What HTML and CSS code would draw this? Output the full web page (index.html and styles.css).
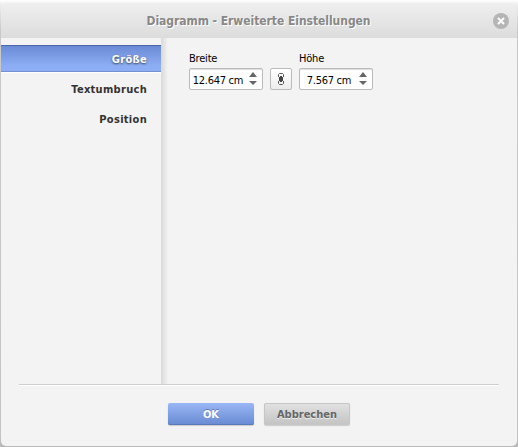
FILE: index.html
```html
<!DOCTYPE html>
<html lang="de">
<head>
<meta charset="utf-8">
<title>Diagramm - Erweiterte Einstellungen</title>
<link rel="stylesheet" href="styles.css">
</head>
<body>
<div class="dialog">
  <header class="header">
    <h1 class="title">Diagramm - Erweiterte Einstellungen</h1>
    <svg class="close" width="16" height="16" viewBox="0 0 16 16"><circle cx="8" cy="8" r="8" fill="#b5b5b5"/><path d="M5 5l6 6M11 5l-6 6" stroke="#fff" stroke-width="2"/></svg>
  </header>
  <main class="body">
    <nav class="menu">
      <div class="item active">Größe</div>
      <div class="item">Textumbruch</div>
      <div class="item">Position</div>
    </nav>
    <div class="separator"></div>
    <section class="content">
      <div class="field">
        <label>Breite</label>
        <div class="spinner"><span>12.647 cm</span><svg width="8" height="14" viewBox="0 0 8 14"><path d="M4 0L8 5H0zM0 9h8L4 13z" fill="#666"/></svg></div>
      </div>
      <div class="lock"><svg width="8" height="14" viewBox="0 0 8 14" fill="none"><path d="M1.5 5V2.5L2.5 1.5h3l1 1V5M1.5 9v2.5l1 1h3l1-1V9" stroke="#555"/><path d="M3 4h2v1h1v4H5v1H3V9H2V5h1z" fill="#444"/></svg></div>
      <div class="field">
        <label>Höhe</label>
        <div class="spinner height"><span>7.567 cm</span><svg width="8" height="14" viewBox="0 0 8 14"><path d="M4 0L8 5H0zM0 9h8L4 13z" fill="#666"/></svg></div>
      </div>
    </section>
  </main>
  <footer class="footer">
    <div class="button primary">OK</div>
    <div class="button">Abbrechen</div>
  </footer>
</div>
</body>
</html>
```
FILE: styles.css
```css
* { box-sizing: border-box; }
body {
  margin: 0;
  height: 447px;
  padding: 3px 1px 1px;
  overflow: hidden;
  background: linear-gradient(#fff, #ececec 5px, #c9c9c9 30px, #c4c4c4 435px, #b8b8b8);
  font: 11px "DejaVu Sans Condensed", "DejaVu Sans", sans-serif;
}
.dialog {
  height: 443px;
  background: #f3f3f3;
  border-radius: 5px;
  overflow: hidden;
  display: flex;
  flex-direction: column;
}
.header {
  height: 35px;
  flex: none;
  display: flex;
  align-items: center;
  padding: 0 8px 0 16px;
  background: linear-gradient(#efefef, #dcdcdc);
}
.title {
  flex: 1;
  margin: 0;
  padding: 1px 0 0 7px;
  text-align: center;
  font-size: 12px;
  line-height: 16px;
  color: #888;
  text-shadow: 1px 1px 0 #fff;
  letter-spacing: -0.05px;
}
.body { flex: 1; display: flex; }
.menu { width: 160px; padding-top: 7px; }
.item {
  height: 30px;
  padding: 7px 14px 0 0;
  text-align: right;
  font-weight: bold;
  letter-spacing: 0.3px;
  line-height: 15px;
  color: #333;
}
.active {
  height: 27px;
  margin-bottom: 3px;
  padding-top: 6px;
  color: #fff;
  text-shadow: 0 1px 2px #345;
  background: linear-gradient(#6b8bd4, #8dadf5 20px);
  border-top: 1px solid #4a68ab;
  border-bottom: 1px solid #7590cf;
  box-shadow: 0 1px #fff;
}
.separator { width: 7px; background: linear-gradient(90deg, #dadada, #e3e3e3 3px, #f3f3f3); }
.content {
  display: flex;
  align-items: flex-end;
  align-self: flex-start;
  gap: 7px;
  height: 52px;
  padding-left: 21px;
}
.field { width: 74px; color: #000; }
.field label { display: block; height: 17px; line-height: 16px; letter-spacing: -0.2px; }
.spinner, .lock {
  height: 22px;
  border: 1px solid #bbb;
  border-radius: 2px;
  background: #fff;
  display: flex;
  align-items: center;
}
.spinner { justify-content: flex-end; gap: 6px; padding-right: 5px; box-shadow: inset 0 1px 1px #ddd; }
.height { gap: 8px; }
.spinner span { white-space: nowrap; letter-spacing: -0.3px; padding-top: 2px; }
.lock { width: 22px; justify-content: center; background: linear-gradient(#fff, #ededed); }
.footer {
  height: 62px;
  flex: none;
  margin: 0 18px;
  border-top: 1px solid #cecece;
  box-shadow: inset 0 1px #fff;
  padding-top: 18px;
  display: flex;
  justify-content: center;
  gap: 10px;
}
.button {
  width: 86px;
  height: 22px;
  border-radius: 2px;
  text-align: center;
  font-weight: bold;
  line-height: 24px;
  color: #666;
  text-shadow: 0 1px #eee;
  background: linear-gradient(#e2e2e2, #c3c3c3);
  box-shadow: inset 0 0 0 1px #c6c6c6, 0 1px 1px #ccc;
}
.primary {
  color: #fff;
  text-shadow: 0 -1px #6079b5;
  background: linear-gradient(#9ab7f5, #688ad2);
  box-shadow: inset 0 -1px #5979bd, 0 1px 1px #ccc;
}
```
